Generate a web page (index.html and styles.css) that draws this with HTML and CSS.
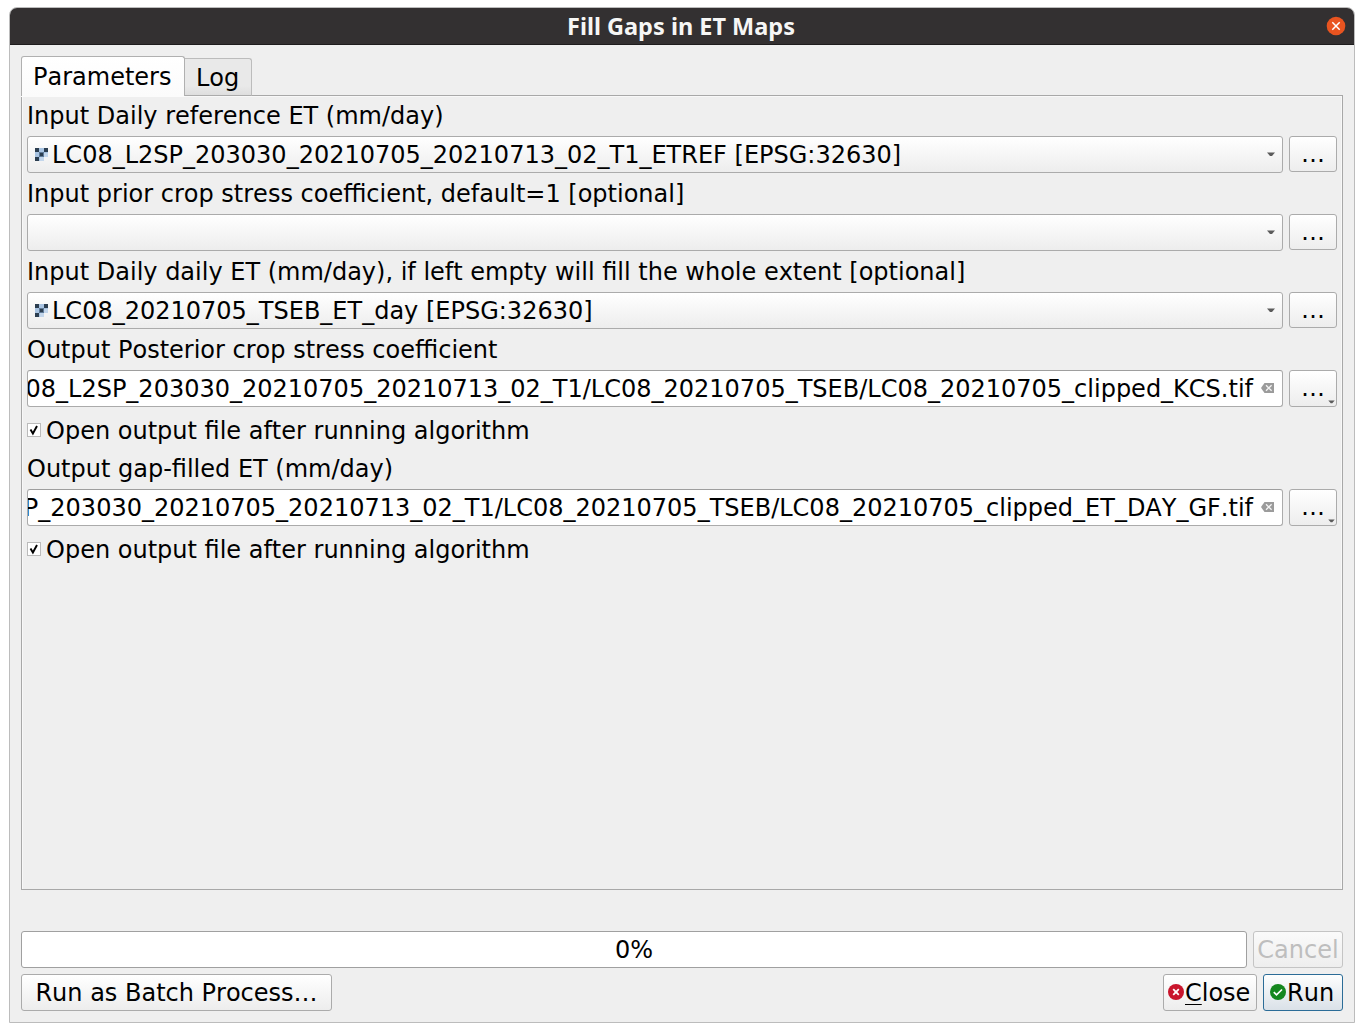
FILE: index.html
```html
<!DOCTYPE html>
<html lang="en">
<head>
<meta charset="utf-8">
<title>Fill Gaps in ET Maps</title>
<link rel="stylesheet" href="styles.css">
</head>
<body>
<svg width="0" height="0" class="defs">
  <symbol id="raster" viewBox="0 0 13 13">
    <path fill="#a9c4e2" d="M0 0h13v9H9v4H0z"/>
    <path fill="#c3d6eb" d="M5 9h4v4H5zM9 5h4v4H9z"/>
    <path fill="#2c3e50" d="M0 0h4v4H0zM9 0h4v4H9zM5 5h3v3H5zM0 9h4v4H0z"/>
    <path fill="#5f7a97" d="M4 4h1v5H4zM8 4h1v5H8zM5 4h3v1H5zM5 8h3v1H5z"/>
  </symbol>
  <symbol id="arrow" viewBox="0 0 8 5"><path fill="#5b5b5b" d="M0 .5h8L5 4H3z"/></symbol>
  <symbol id="clear" viewBox="0 0 13 10">
    <path fill="#9b9b9b" d="M3.5 0H13v10H3.5L0 5z"/>
    <path stroke="#f4f4f4" stroke-width="1.3" d="M5 2.2l5.6 5.6M10.600 2.200L5 7.800"/>
  </symbol>
  <symbol id="tick" viewBox="0 0 12 12"><path fill="none" stroke="#000" stroke-width="1.900" d="M2.500 5.500l2.400 4L9 2"/></symbol>
</svg>
<div class="window">
  <header class="titlebar">
    <span class="title">Fill Gaps in ET Maps</span>
    <svg class="win-close" viewBox="0 0 20 20"><circle cx="10" cy="10" r="9.300" fill="#e95420"/><path stroke="#fff" stroke-width="1.500" d="M6.300 6.300l7.400 7.400M13.700 6.300l-7.400 7.400"/></svg>
  </header>
  <main class="content">
    <nav class="tabs"><div class="tab active">Parameters</div><div class="tab">Log</div></nav>
    <section class="pane">
      <div class="label">Input Daily reference ET (mm/day)</div>
      <div class="row">
        <div class="combo"><svg class="raster"><use href="#raster"/></svg><span class="text">LC08_L2SP_203030_20210705_20210713_02_T1_ETREF [EPSG:32630]</span><svg class="arrow"><use href="#arrow"/></svg></div>
        <div class="browse">…</div>
      </div>
      <div class="label">Input prior crop stress coefficient, default=1 [optional]</div>
      <div class="row">
        <div class="combo"><svg class="arrow"><use href="#arrow"/></svg></div>
        <div class="browse">…</div>
      </div>
      <div class="label">Input Daily daily ET (mm/day), if left empty will fill the whole extent [optional]</div>
      <div class="row">
        <div class="combo"><svg class="raster"><use href="#raster"/></svg><span class="text">LC08_20210705_TSEB_ET_day [EPSG:32630]</span><svg class="arrow"><use href="#arrow"/></svg></div>
        <div class="browse">…</div>
      </div>
      <div class="label">Output Posterior crop stress coefficient</div>
      <div class="row">
        <div class="edit"><span class="text">08_L2SP_203030_20210705_20210713_02_T1/LC08_20210705_TSEB/LC08_20210705_clipped_KCS.tif</span><svg class="clear"><use href="#clear"/></svg></div>
        <div class="browse menu">…<svg class="corner"><use href="#arrow"/></svg></div>
      </div>
      <div class="check"><svg class="box"><use href="#tick"/></svg><span class="text">Open output file after running algorithm</span></div>
      <div class="label">Output gap-filled ET (mm/day)</div>
      <div class="row">
        <div class="edit"><span class="text">P_203030_20210705_20210713_02_T1/LC08_20210705_TSEB/LC08_20210705_clipped_ET_DAY_GF.tif</span><svg class="clear"><use href="#clear"/></svg></div>
        <div class="browse menu">…<svg class="corner"><use href="#arrow"/></svg></div>
      </div>
      <div class="check"><svg class="box"><use href="#tick"/></svg><span class="text">Open output file after running algorithm</span></div>
    </section>
    <div class="row">
      <div class="progress"><span class="text">0%</span></div>
      <div class="button cancel"><span class="text">Cancel</span></div>
    </div>
    <div class="row actions">
      <div class="button batch"><span class="text">Run as Batch Process…</span></div>
      <div class="button close"><svg class="status" viewBox="0 0 16 16"><circle cx="8" cy="8" r="8" fill="#c9152c"/><path stroke="#fff" stroke-width="1.800" d="M5.200 5.200l5.600 5.600M10.800 5.200l-5.600 5.600"/></svg><span class="text"><span class="mnemonic">C</span>lose</span></div>
      <div class="button run"><svg class="status" viewBox="0 0 16 16"><circle cx="8" cy="8" r="8" fill="#14871f"/><path fill="none" stroke="#fff" stroke-width="1.700" d="M3.800 8.200l2.700 2.600 5.500-5.300"/></svg><span class="text">Run</span></div>
    </div>
  </main>
</div>
</body>
</html>
```
FILE: styles.css
```css
* { box-sizing: border-box; }
body {
  margin: 0;
  padding: 7px 9px 9px;
  height: 1032px;
  background: #fff;
  color: #000;
  font: 24px/29px "DejaVu Sans", sans-serif;
  font-kerning: none;
  white-space: nowrap;
  overflow: hidden;
}
svg { display: block; flex: none; }
.defs { position: absolute; }
.window {
  height: 1016px;
  border: 1px solid #bcbcbc;
  border-radius: 8px 8px 0 0;
  background: #efefef;
  overflow: hidden;
  display: flex;
  flex-direction: column;
}
.titlebar {
  height: 37px;
  flex: none;
  display: grid;
  grid-template-columns: 27px 1fr 28px;
  align-items: center;
  background: #333031;
  border-bottom: 1px solid #1e1c1d;
}
.title {
  grid-column: 2;
  justify-self: center;
  margin-right: 1px;
  color: #f6f6f5;
  font: bold 23.5px/36px "Noto Sans", sans-serif;
  font-kerning: auto;
}
.win-close { width: 20px; height: 20px; }
.content {
  flex: 1;
  padding: 11px;
  display: flex;
  flex-direction: column;
}
.tabs { display: flex; align-items: flex-end; height: 40px; margin-bottom: -1px; z-index: 1; }
.tab {
  width: 67px;
  height: 38px;
  padding-left: 11px;
  line-height: 38px;
  border: 1px solid #bcbcbc;
  border-left: 0;
  border-bottom-color: #ababab;
  border-radius: 0 3px 0 0;
  background: linear-gradient(#e9e9e9 75%, #dedede);
}
.tab.active {
  width: 164px;
  height: 40px;
  padding-left: 11px;
  line-height: 41px;
  border: 1px solid #b0b0b0;
  border-bottom: 0;
  border-radius: 3px 3px 0 0;
  background: linear-gradient(#fff, #fbfbfb);
  box-shadow: 0 1px 0 #fbfbfb;
}
.pane {
  height: 795px;
  padding: 5px;
  margin-bottom: 41px;
  border: 1px solid #a8a8a8;
  box-shadow: inset 1px 1px #f8f8f8, inset -1px 0 #f8f8f8;
  display: flex;
  flex-direction: column;
  gap: 6px;
}
.label { height: 29px; line-height: 31px; }
.text { padding-top: 2px; }
.row { display: flex; gap: 6px; height: 37px; flex: none; }
.combo, .edit, .browse, .button, .progress {
  display: flex;
  align-items: center;
  border: 1px solid #ababab;
  border-radius: 3px;
  background: linear-gradient(#fff, #ededed);
}
.combo { flex: 1; padding: 0 7px; }
.combo .raster { width: 13px; height: 13px; margin-right: 4px; }
.combo .arrow { width: 8px; height: 5px; margin-left: auto; }
.edit {
  flex: 1;
  min-width: 0;
  justify-content: flex-end;
  overflow: hidden;
  padding-right: 8px;
  background: #fff;
  border-top-color: #9e9e9e;
}
.clear { width: 13px; height: 10px; margin: -1px 0 0 8px; }
.browse { position: relative; width: 48px; height: 36px; justify-content: center; }
.browse.menu { height: 37px; }
.corner { position: absolute; right: 1px; bottom: 2px; width: 7px; height: 4px; }
.check { display: flex; align-items: center; height: 35px; gap: 5px; }
.box { width: 14px; height: 14px; margin-top: -1px; background: #fff; border: 1px solid #bbb; }
.progress { flex: 1; justify-content: center; background: #fff; border-color: #a0a0a0; }
.button { justify-content: center; }
.cancel { width: 90px; color: #bebebe; border-color: #c4c4c4; background: linear-gradient(#fafafa, #eee); }
.actions { margin-top: 6px; }
.batch { width: 311px; margin-right: auto; }
.close { width: 94px; justify-content: flex-start; padding-left: 4px; }
.run { width: 80px; justify-content: flex-start; padding-left: 6px; border-color: #2b6c97; background: linear-gradient(#fdfefe, #dae1e8); }
.status { width: 16px; height: 16px; margin: -1px 1px 0 0; }
.mnemonic { text-decoration: underline 1px; text-underline-offset: 3px; text-decoration-skip-ink: none; }
```
